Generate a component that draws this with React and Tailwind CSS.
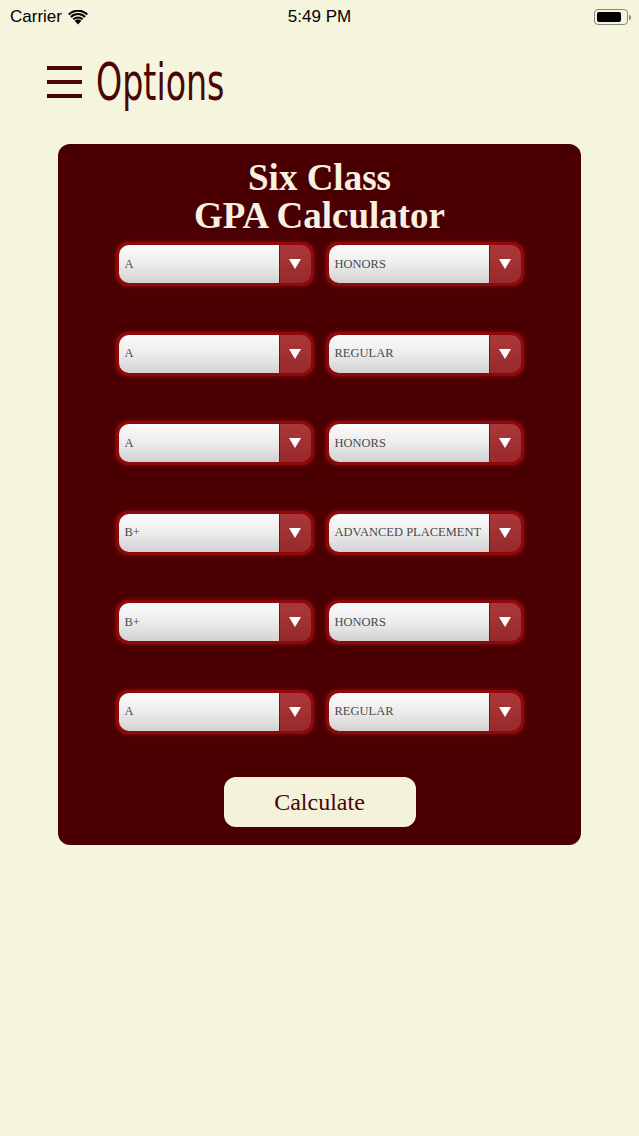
import React from 'react';

const rows = [
  ['A', 'HONORS'],
  ['A', 'REGULAR'],
  ['A', 'HONORS'],
  ['B+', 'ADVANCED PLACEMENT'],
  ['B+', 'HONORS'],
  ['A', 'REGULAR'],
];

function Select({ value }) {
  return (
    <div className="w-[198px] h-[44px] rounded-[12px] bg-[#8c0a0c] p-[3px] shadow-[0_0_4px_rgba(200,20,20,0.6)]">
      <div className="flex h-full rounded-[10px] overflow-hidden">
        <div className="flex-1 flex items-center pl-[6px] bg-gradient-to-b from-[#fbfbfb] via-[#ececec] to-[#d2d2d2] text-[12.5px] text-[#4a4a4a] font-[Liberation_Serif,serif] whitespace-nowrap overflow-hidden">
          {value}
        </div>
        <div className="w-[32px] flex items-center justify-center bg-gradient-to-b from-[#a9383a] to-[#982a2c] border-l border-[#7a1214]">
          <svg width="12" height="10" viewBox="0 0 12 10">
            <path d="M0 0 L12 0 L6 10 Z" fill="#fff" />
          </svg>
        </div>
      </div>
    </div>
  );
}

export default function App() {
  return (
    <div className="min-h-[1136px] bg-[#f5f4dc] font-[Liberation_Sans,sans-serif]">
      {/* status bar */}
      <div className="relative h-[34px] flex items-center px-[10px] text-[17px] text-black">
        <div className="flex items-center gap-[6px]">
          <span>Carrier</span>
          <svg width="20" height="15" viewBox="0 0 20 15">
            <path d="M10 14.5 L6.6 10.8 A5 5 0 0 1 13.4 10.8 Z" fill="#000" />
            <path d="M4.6 8.6 A7.8 7.8 0 0 1 15.4 8.6 L14 10.1 A5.8 5.8 0 0 0 6 10.1 Z" fill="#000" />
            <path d="M2.2 6.2 A11 11 0 0 1 17.8 6.2 L16.4 7.7 A9 9 0 0 0 3.6 7.7 Z" fill="#000" />
            <path d="M0 3.8 A14 14 0 0 1 20 3.8 L18.6 5.3 A12 12 0 0 0 1.4 5.3 Z" fill="#000" />
          </svg>
        </div>
        <div className="absolute left-0 right-0 text-center font-medium pointer-events-none">5:49 PM</div>
        <div className="ml-auto flex items-center mr-[-2px]">
          <div className="w-[34px] h-[16px] rounded-[4px] border border-[#888] p-[2px]">
            <div className="w-[24px] h-full rounded-[2px] bg-black" />
          </div>
          <div className="w-[2px] h-[5px] bg-[#888] rounded-r-sm ml-[1px]" />
        </div>
      </div>

      {/* header */}
      <div className="flex items-center h-[96px] pl-[47px]">
        <div className="flex flex-col gap-[10px] w-[35px]">
          <div className="h-[4px] bg-[#4a0505]" />
          <div className="h-[4px] bg-[#4a0505]" />
          <div className="h-[4px] bg-[#4a0505]" />
        </div>
        <span className="ml-[14px] inline-block scale-y-[1.4] text-[37px] leading-none text-[#4a0505] font-[Liberation_Sans_Narrow,DejaVu_Sans_Condensed,sans-serif]">
          Options
        </span>
      </div>

      {/* card */}
      <div className="mx-auto mt-[14px] w-[523px] rounded-[12px] bg-[#4a0002] pt-[15px] pb-[18px] flex flex-col items-center">
        <h1 className="text-center text-[#f6f1e2] font-bold text-[37px] leading-[38px] font-[Liberation_Serif,serif]">
          Six Class
          <br />
          GPA Calculator
        </h1>
        <div className="mt-[7px] flex flex-col gap-[45.5px]">
          {rows.map((r, i) => (
            <div key={i} className="flex gap-[12px]">
              <Select value={r[0]} />
              <Select value={r[1]} />
            </div>
          ))}
        </div>
        <button className="mt-[43px] w-[192px] h-[50px] rounded-[12px] bg-[#f5f2dc] text-[#4a0505] text-[24px] font-[Liberation_Serif,serif]">
          Calculate
        </button>
      </div>
    </div>
  );
}
